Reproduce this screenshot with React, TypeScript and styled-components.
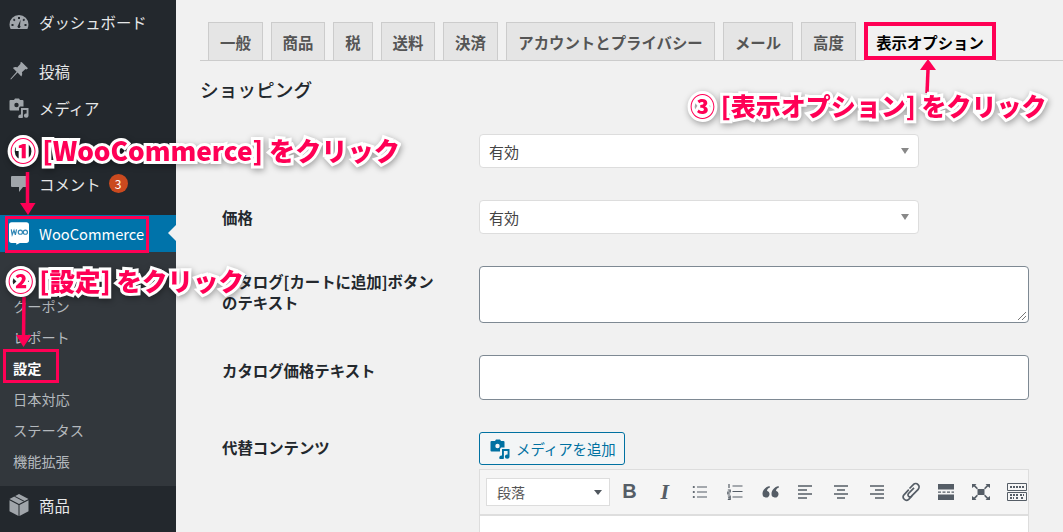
import React from "react";
import styled, { createGlobalStyle } from "styled-components";

const FONT = `"Noto Sans CJK JP", "Open Sans", sans-serif`;
const PINK = "#ff0055";

const Global = createGlobalStyle`
  html, body { margin: 0; padding: 0; background: #f1f1f1; }
  body { font-family: ${FONT}; overflow: hidden; }
  * { box-sizing: border-box; }
`;

const Page = styled.div`
  position: relative;
  display: flex;
  width: 1063px;
  height: 532px;
  overflow: hidden;
  background: #f1f1f1;
`;

const Sidebar = styled.nav`
  width: 176px;
  flex: none;
  background: #23282d;
  display: flex;
  flex-direction: column;
  padding-top: 3px;
`;

const MenuRow = styled.div<{ $h?: number }>`
  height: ${(p) => p.$h ?? 37}px;
  display: flex;
  align-items: center;
  gap: 10px;
  padding-left: 9px;
  color: #e6e7e8;
  font-size: 15.4px;
  flex: none;
`;

const Spacer = styled.div<{ $h: number }>`
  height: ${(p) => p.$h}px;
  flex: none;
`;

const IconSlot = styled.span`
  width: 20px;
  height: 20px;
  flex: none;
  display: flex;
  align-items: center;
  justify-content: center;
  color: #a0a5aa;
`;

const Badge = styled.span`
  width: 19px;
  height: 19px;
  border-radius: 50%;
  background: #ca4a1f;
  color: #fff;
  font-size: 12px;
  display: flex;
  align-items: center;
  justify-content: center;
  margin-left: -2px;
`;

const ActiveRow = styled(MenuRow)`
  position: relative;
  background: #0073aa;
  color: #fff;
  font-size: 14.7px;
  &::after {
    content: "";
    position: absolute;
    right: 0;
    top: 10px;
    border: 8px solid transparent;
    border-right-color: #f1f1f1;
    border-left-width: 0;
  }
`;

const SubMenu = styled.div`
  height: 234px;
  flex: none;
  background: #32373c;
  padding-top: 38px;
`;

const SubItem = styled.div<{ $on?: boolean }>`
  height: 31px;
  padding-left: 13px;
  display: flex;
  align-items: center;
  color: ${(p) => (p.$on ? "#fff" : "#b4b9be")};
  font-weight: ${(p) => (p.$on ? 700 : 400)};
  font-size: 14.2px;
`;

const Main = styled.main`
  flex: 1;
  min-width: 0;
  padding: 22px 0 0 24px;
  color: #23282d;
`;

const TabBar = styled.div`
  display: flex;
  height: 39px;
  padding-left: 8px;
  gap: 8px;
  border-bottom: 1px solid #ccc;
`;

const Tab = styled.div<{ $w: number; $on?: boolean }>`
  width: ${(p) => p.$w}px;
  height: ${(p) => (p.$on ? 39 : 38)}px;
  flex: none;
  display: flex;
  align-items: center;
  justify-content: center;
  font-size: 15.4px;
  font-weight: 700;
  white-space: nowrap;
  color: ${(p) => (p.$on ? "#000" : "#555")};
  background: ${(p) => (p.$on ? "#f1f1f1" : "#e5e5e5")};
  border: 1px solid #ccc;
  border-bottom: ${(p) => (p.$on ? "1px solid #f1f1f1" : "none")};
`;

const Heading = styled.h2`
  margin: 15px 0 0;
  font-size: 18.7px;
  line-height: 25px;
  font-weight: 500;
  color: #23282d;
`;

const Row = styled.div<{ $top: number }>`
  display: grid;
  grid-template-columns: 257px 550px;
  padding-left: 22px;
  margin-top: ${(p) => p.$top}px;
  align-items: start;
`;

const Label = styled.div<{ $pad?: number }>`
  font-size: 15.4px;
  line-height: 21px;
  font-weight: 700;
  padding-top: ${(p) => p.$pad ?? 0}px;
  color: #23282d;
  white-space: nowrap;
`;

const Select = styled.div`
  position: relative;
  width: 440px;
  height: 34px;
  background: #fff;
  border: 1px solid #ddd;
  border-radius: 4px;
  color: #444;
  font-size: 15px;
  display: flex;
  align-items: center;
  padding-left: 9px;
  &::after {
    content: "";
    position: absolute;
    right: 9px;
    top: 13px;
    border-style: solid;
    border-width: 6px 4px 0;
    border-color: #888 transparent transparent;
  }
`;

const TextArea = styled.div`
  position: relative;
  width: 550px;
  height: 57px;
  background: #fff;
  border: 1px solid #7e8993;
  border-radius: 4px;
`;

const Grip = styled.svg`
  position: absolute;
  right: 1px;
  bottom: 1px;
`;

const TextInput = styled.div`
  width: 550px;
  height: 45px;
  background: #fff;
  border: 1px solid #7e8993;
  border-radius: 4px;
`;

const MediaButton = styled.div`
  width: 146px;
  height: 33px;
  display: flex;
  align-items: center;
  gap: 6px;
  padding-left: 10px;
  border: 1px solid #0071a1;
  border-radius: 3px;
  background: #f3f5f6;
  color: #0071a1;
  font-size: 14.4px;
`;

const Editor = styled.div`
  margin-top: 4px;
  width: 550px;
  border: 1px solid #ddd;
  background: #fff;
  height: 80px;
`;

const Toolbar = styled.div`
  height: 46px;
  background: #f5f5f5;
  border-bottom: 2px solid #dedede;
  display: flex;
  align-items: center;
  padding: 0 0 1px 6px;
  color: #555d66;
`;

const FormatSelect = styled.div`
  position: relative;
  width: 124px;
  height: 28px;
  flex: none;
  margin-right: 2px;
  background: #fff;
  border: 1px solid #ddd;
  font-size: 14px;
  color: #555;
  display: flex;
  align-items: center;
  padding-left: 10px;
  &::after {
    content: "";
    position: absolute;
    right: 7px;
    top: 11px;
    border-style: solid;
    border-width: 5px 4px 0;
    border-color: #50575e transparent transparent;
  }
`;

const ToolButton = styled.span`
  width: 35.2px;
  height: 24px;
  flex: none;
  display: flex;
  align-items: center;
  justify-content: center;
`;

const BoldGlyph = styled.span`
  font: 700 20px "Liberation Sans", sans-serif;
  color: #555d66;
`;

const ItalicGlyph = styled(BoldGlyph)`
  font-style: italic;
  font-family: "Liberation Serif", serif;
  font-size: 22px;
`;

const Callout = styled.div<{ $x: number; $y: number; $size: number }>`
  position: absolute;
  left: ${(p) => p.$x}px;
  top: ${(p) => p.$y}px;
  font-size: ${(p) => p.$size}px;
  line-height: 34px;
  font-weight: 900;
  white-space: nowrap;
  color: ${PINK};
  -webkit-text-stroke: 6px #fff;
  paint-order: stroke fill;
  filter: drop-shadow(1px 2px 3px rgba(0, 0, 0, 0.35));
`;

const Overlay = styled.svg`
  position: absolute;
  left: 0;
  top: 0;
  pointer-events: none;
`;

const Frame = styled.div<{ $x: number; $y: number; $w: number; $h: number; $b: number }>`
  position: absolute;
  left: ${(p) => p.$x}px;
  top: ${(p) => p.$y}px;
  width: ${(p) => p.$w}px;
  height: ${(p) => p.$h}px;
  border: ${(p) => p.$b}px solid ${PINK};
`;

const Gauge = () => (
  <svg width="20" height="20" viewBox="0 0 20 20" fill="currentColor">
    <path fillRule="evenodd" d="M10 3a9.5 9.5 0 0 0-9.5 9.5c0 1.6.4 3.1 1.1 4.5h16.8c.7-1.4 1.1-2.9 1.1-4.5A9.5 9.5 0 0 0 10 3zM9 5h2v2H9zM5 6.6l1.5 1.3-1.3 1.3L4 8zm10 0L16 8l-1.2 1.2-1.3-1.3zM2.500 12h2v2h-2zm13 0h2v2h-2zM11.600 7.800l-.6 5.600a1.500 1.500 0 1 1-2 0z" />
  </svg>
);
const Pin = () => (
  <svg width="20" height="20" viewBox="0 0 20 20" fill="currentColor">
    <path d="M12.600 1l6.400 6.300-1.500 1.200-1-.6-3.600 3.400c.6 1.600.3 3-.6 4.200L8.600 11.400 2 18.500l-.7-.6 6.300-7.200L3.900 7c1.200-1 2.700-1.200 4.200-.6l3.500-3.600-.5-1z" />
  </svg>
);
const Media = ({ size = 20 }: { size?: number }) => (
  <svg width={size} height={size} viewBox="0 0 20 20" fill="currentColor">
    <path fillRule="evenodd" d="M2.500 2H5L6 .500h4L11 2h2.500a1 1 0 0 1 1 1v5.500H11L10 10v2.500H1.500a1 1 0 0 1-1-1V3a1 1 0 0 1 1-1zM7.500 4.800a2.200 2.200 0 1 0 0 4.400 2.200 2.200 0 0 0 0-4.400z" />
    <path d="M12 10h7.500v7.500a2.300 2.100 0 1 1-1.900-2V12h-3.700v6.500a2.300 2.100 0 1 1-1.900-2z" />
  </svg>
);
const Comment = () => (
  <svg width="20" height="20" viewBox="0 0 20 20" fill="currentColor">
    <path d="M3 2h14a1 1 0 0 1 1 1v9a1 1 0 0 1-1 1h-3l-4 5v-5H3a1 1 0 0 1-1-1V3a1 1 0 0 1 1-1z" />
  </svg>
);
const Woo = () => (
  <svg width="22" height="25" viewBox="0 0 22 25">
    <path fill="#fff" d="M3 0h16a3 3 0 0 1 3 3v17a3 3 0 0 1-3 3h-7l-4 2v-2H3a3 3 0 0 1-3-3V3a3 3 0 0 1 3-3z" />
    <path fill="none" stroke="#2f86b5" strokeWidth="1.300" d="M2.500 8l1 6 2-5 1.500 5 1.300-6" />
    <circle cx="12.500" cy="11" r="2.300" fill="none" stroke="#2f86b5" strokeWidth="1.300" />
    <circle cx="18" cy="11" r="2.300" fill="none" stroke="#2f86b5" strokeWidth="1.300" />
  </svg>
);
const BoxIcon = () => (
  <svg width="20" height="24" viewBox="0 0 20 24">
    <path fill="#a0a5aa" d="M10 1l9.500 5L10 11 .5 6z" />
    <path fill="#a0a5aa" d="M.5 7.200L9.500 12v11L.5 18.200zM19.500 7.200V18.200L10.500 23V12z" />
    <path fill="#23282d" d="M5 3.500l1-.5 9.500 5-1 .5z" />
  </svg>
);

const Bars = ({ d }: { d: string }) => (
  <svg width="16" height="16" viewBox="0 0 16 16" fill="none" stroke="currentColor" strokeWidth="1.500">
    <path d={d} />
  </svg>
);
const Bullet = () => (
  <svg width="16" height="16" viewBox="0 0 16 16" fill="currentColor" stroke="currentColor">
    <path strokeWidth="1.200" d="M5 3h10M5 8h10M5 13h10" />
    <circle cx="1.800" cy="3" r="1.100" stroke="none" />
    <circle cx="1.800" cy="8" r="1.100" stroke="none" />
    <circle cx="1.800" cy="13" r="1.100" stroke="none" />
  </svg>
);
const Numbered = () => (
  <svg width="16" height="17" viewBox="0 0 16 17" stroke="currentColor" fill="none">
    <path strokeWidth="1.200" d="M5.500 3h10M5.500 8.500h10M5.500 14h10M2 1v4M.8 7h2.400v2H.8v2h2.400M.8 13h2.400v3.500H.8M1 14.800h2" />
  </svg>
);
const Quote = () => (
  <svg width="17" height="14" viewBox="0 0 17 14" fill="currentColor">
    <path d="M7.500 1C3.500 2 .5 5 .5 9a3.500 3.500 0 1 0 4.500-3.300c.1-1.300 1.200-2.700 3-3.200zM16.500 1c-4 1-7 4-7 8a3.500 3.500 0 1 0 4.500-3.300c.1-1.300 1.200-2.700 3-3.200z" />
  </svg>
);
const LinkIcon = () => (
  <svg width="20" height="20" viewBox="0 0 20 20" fill="none" stroke="currentColor" strokeWidth="1.700">
    <path d="M8.500 6.500l3.800-3.800a3.300 3.300 0 0 1 4.900 4.600l-6.700 6.900a2 2 0 0 1-3-2.700l5.500-5.700" />
    <path d="M7.800 7.700L3 12.800a3.300 3.300 0 0 0 4.700 4.600L11 14" />
  </svg>
);
const More = () => (
  <svg width="16" height="16" viewBox="0 0 16 16" fill="currentColor">
    <path d="M0 0h16v5.500H0zM0 10.500h16V16H0zM0 7.500h3v1.300H0zM4.500 7.500h3v1.300h-3zM9 7.500h3v1.300H9zM13.500 7.500H16v1.300h-2.500z" />
  </svg>
);
const Fullscreen = () => (
  <svg width="18" height="16" viewBox="0 0 18 16" fill="currentColor">
    <path d="M5.500 5h7v6h-7z" />
    <path d="M0 0h4.500L3.200 1.300 6 4.200 4.800 5.300 2 2.500 0 4zM18 0h-4.500l1.300 1.300L12 4.200l1.200 1.100L16 2.500 18 4zM0 16h4.500l-1.300-1.300L6 11.800l-1.200-1.100L2 13.500 0 12zM18 16h-4.500l1.300-1.300-2.800-2.900 1.200-1.100 2.800 2.800 2-1.500z" />
  </svg>
);
const Keyboard = () => (
  <svg width="20" height="18" viewBox="0 0 20 18">
    <path fill="none" stroke="#555d66" strokeWidth="1" d="M.5.500h19v7H.5zM.5 9.500h19v8H.5z" />
    <path stroke="#555d66" strokeWidth="2" strokeDasharray="2 1" d="M3 4h14M3 12h8M13 12h4M3 15h4M9 15h3M14 15h3" />
  </svg>
);

const tabs: [string, number][] = [
  ["一般", 55], ["商品", 54], ["税", 40], ["送料", 54], ["決済", 55],
  ["アカウントとプライバシー", 209], ["メール", 70], ["高度", 55],
];

export default function App() {
  return (
    <Page>
      <Global />
      <Sidebar>
        <MenuRow><IconSlot><Gauge /></IconSlot>ダッシュボード</MenuRow>
        <Spacer $h={12} />
        <MenuRow><IconSlot><Pin /></IconSlot>投稿</MenuRow>
        <MenuRow><IconSlot><Media /></IconSlot>メディア</MenuRow>
        <MenuRow $h={38}><IconSlot /></MenuRow>
        <MenuRow $h={39}><IconSlot><Comment /></IconSlot>コメント<Badge>3</Badge></MenuRow>
        <Spacer $h={12} />
        <ActiveRow>
          <IconSlot><Woo /></IconSlot>WooCommerce
        </ActiveRow>
        <SubMenu>
          <SubItem>クーポン</SubItem>
          <SubItem>レポート</SubItem>
          <SubItem $on>設定</SubItem>
          <SubItem>日本対応</SubItem>
          <SubItem>ステータス</SubItem>
          <SubItem>機能拡張</SubItem>
        </SubMenu>
        <MenuRow><IconSlot><BoxIcon /></IconSlot>商品</MenuRow>
      </Sidebar>
      <Main>
        <TabBar>
          {tabs.map(([t, w]) => <Tab key={t} $w={w}>{t}</Tab>)}
          <Tab $w={132} $on>表示オプション</Tab>
        </TabBar>
        <Heading>ショッピング</Heading>
        <Row $top={33}>
          <Label />
          <Select>有効</Select>
        </Row>
        <Row $top={32}>
          <Label $pad={7}>価格</Label>
          <Select>有効</Select>
        </Row>
        <Row $top={32}>
          <Label $pad={5}>カタログ[カートに追加]ボタン<br />のテキスト</Label>
          <TextArea>
            <Grip width="10" height="10" viewBox="0 0 10 10" stroke="#777" fill="none">
              <path d="M9 1L1 9M9 5L5 9" />
            </Grip>
          </TextArea>
        </Row>
        <Row $top={32}>
          <Label $pad={5}>カタログ価格テキスト</Label>
          <TextInput />
        </Row>
        <Row $top={32}>
          <Label $pad={5}>代替コンテンツ</Label>
          <div>
            <MediaButton><Media size={20} />メディアを追加</MediaButton>
            <Editor>
              <Toolbar>
                <FormatSelect>段落</FormatSelect>
                <ToolButton><BoldGlyph>B</BoldGlyph></ToolButton>
                <ToolButton><ItalicGlyph>I</ItalicGlyph></ToolButton>
                <ToolButton><Bullet /></ToolButton>
                <ToolButton><Numbered /></ToolButton>
                <ToolButton><Quote /></ToolButton>
                <ToolButton><Bars d="M0 2h14M0 6h9M0 10h14M0 14h9" /></ToolButton>
                <ToolButton><Bars d="M1 2h14M4 6h8M1 10h14M4 14h8" /></ToolButton>
                <ToolButton><Bars d="M2 2h14M7 6h9M2 10h14M7 14h9" /></ToolButton>
                <ToolButton><LinkIcon /></ToolButton>
                <ToolButton><More /></ToolButton>
                <ToolButton><Fullscreen /></ToolButton>
                <ToolButton><Keyboard /></ToolButton>
              </Toolbar>
            </Editor>
          </div>
        </Row>
      </Main>

      <Frame $x={5} $y={216} $w={144} $h={37} $b={3} />
      <Frame $x={3} $y={349} $w={56} $h={34} $b={3} />
      <Frame $x={864} $y={22} $w={132} $h={38} $b={4} />
      <Overlay width="1063" height="532" viewBox="0 0 1063 532" fill={PINK} stroke={PINK} strokeWidth="3.500">
        <path fill="none" d="M27.500 172V205" />
        <path stroke="none" d="M20 203h15.500l-7.500 12z" />
        <path fill="none" d="M24 297L23.500 337" />
        <path stroke="none" d="M16 335h15.500l-8 12z" />
        <path fill="none" d="M927 93L928 70" />
        <path stroke="none" d="M920 70h16l-8-11z" />
      </Overlay>
      <Callout $x={10} $y={133} $size={26.2}>① [WooCommerce] をクリック</Callout>
      <Callout $x={8} $y={263} $size={25.5}>② [設定] をクリック</Callout>
      <Callout $x={690} $y={88} $size={25}>③ [表示オプション] をクリック</Callout>
    </Page>
  );
}
